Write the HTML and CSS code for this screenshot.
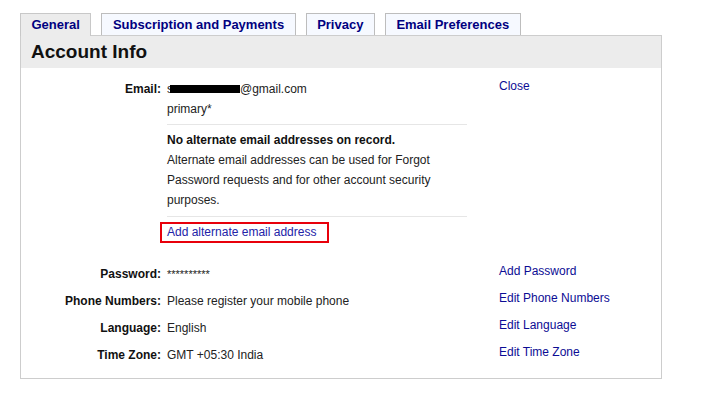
FILE: index.html
```html
<!DOCTYPE html>
<html>
<head>
<meta charset="utf-8">
<link rel="stylesheet" href="styles.css">
</head>
<body>
<div class="page">
  <div class="tabs">
    <div class="tab active">General</div>
    <div class="tab">Subscription and Payments</div>
    <div class="tab">Privacy</div>
    <div class="tab">Email Preferences</div>
  </div>
  <div class="panel">
    <div class="panel-head"><h1 class="title">Account Info</h1></div>
    <div class="info">
      <div class="label">Email:</div>
      <div class="value email-block">
        <div class="line">s<span class="redact"></span>@gmail.com</div>
        <div class="line">primary*</div>
        <div class="sep"></div>
        <div class="line strong">No alternate email addresses on record.</div>
        <div class="line">Alternate email addresses can be used for Forgot Password requests and for other account security purposes.</div>
        <div class="sep sep2"></div>
        <div class="highlight"><a class="alt-link" href="#">Add alternate email address</a></div>
      </div>
      <div class="action"><a href="#">Close</a></div>

      <div class="label">Password:</div>
      <div class="value stars">**********</div>
      <div class="action"><a href="#">Add Password</a></div>

      <div class="label">Phone Numbers:</div>
      <div class="value">Please register your mobile phone</div>
      <div class="action"><a href="#">Edit Phone Numbers</a></div>

      <div class="label">Language:</div>
      <div class="value">English</div>
      <div class="action"><a href="#">Edit Language</a></div>

      <div class="label">Time Zone:</div>
      <div class="value">GMT +05:30 India</div>
      <div class="action"><a href="#">Edit Time Zone</a></div>
    </div>
  </div>
</div>
</body>
</html>
```
FILE: styles.css
```css
html, body {
  margin: 0;
  padding: 0;
  background: #fff;
  font-family: "Liberation Sans", Arial, sans-serif;
}
.page {
  padding: 13px 0 0 20px;
  width: 642px;
}
.tabs {
  display: flex;
  gap: 10px;
  align-items: flex-end;
}
.tab {
  height: 21px;
  line-height: 21px;
  padding: 0 10.5px;
  border: 1px solid #bdbdbd;
  border-bottom: none;
  background: #f6f9ff;
  color: #000080;
  font-size: 13px;
  font-weight: bold;
}
.tab.active {
  background: #ececec;
  border-color: #c8c8c8;
  height: 22px;
  margin-bottom: -1px;
  position: relative;
  z-index: 1;
}
.panel {
  border: 1px solid #cdcdcd;
}
.panel-head {
  background: #ececec;
  height: 32px;
  display: flex;
  align-items: center;
  padding-left: 10px;
}
.title {
  margin: 0;
  font-size: 19px;
  font-weight: bold;
  color: #111;
}
.info {
  display: grid;
  grid-template-columns: 140px 300px 1fr;
  column-gap: 6px;
  row-gap: 7px;
  padding: 11px 0 13px 0;
  font-size: 12px;
}
.label {
  text-align: right;
  font-weight: bold;
  color: #111;
  line-height: 20px;
}
.value {
  color: #222;
  line-height: 20px;
}
.action {
  padding-left: 26px;
  line-height: 14px;
}
.action a {
  color: #0c0c94;
  text-decoration: none;
}
.email-block {
  margin-bottom: 14px;
}
.line {
  line-height: 20px;
}
.strong {
  font-weight: bold;
  color: #111;
}
.redact {
  display: inline-block;
  width: 70px;
  height: 8px;
  background: #000;
  margin-left: -3px;
  vertical-align: 0px;
}
.stars {
  font-size: 11px;
}
.sep {
  height: 1px;
  background: #e6e6e6;
  margin: 5px 0 5px 0;
}
.sep.sep2 {
  margin: 6px 0 5px 0;
}
.highlight {
  display: inline-block;
  border: 2px solid #e8000b;
  margin-left: -7px;
  padding: 0 11px 0 5px;
  line-height: 17px;
}
.alt-link {
  color: #2323a8;
  text-decoration: none;
}
```
